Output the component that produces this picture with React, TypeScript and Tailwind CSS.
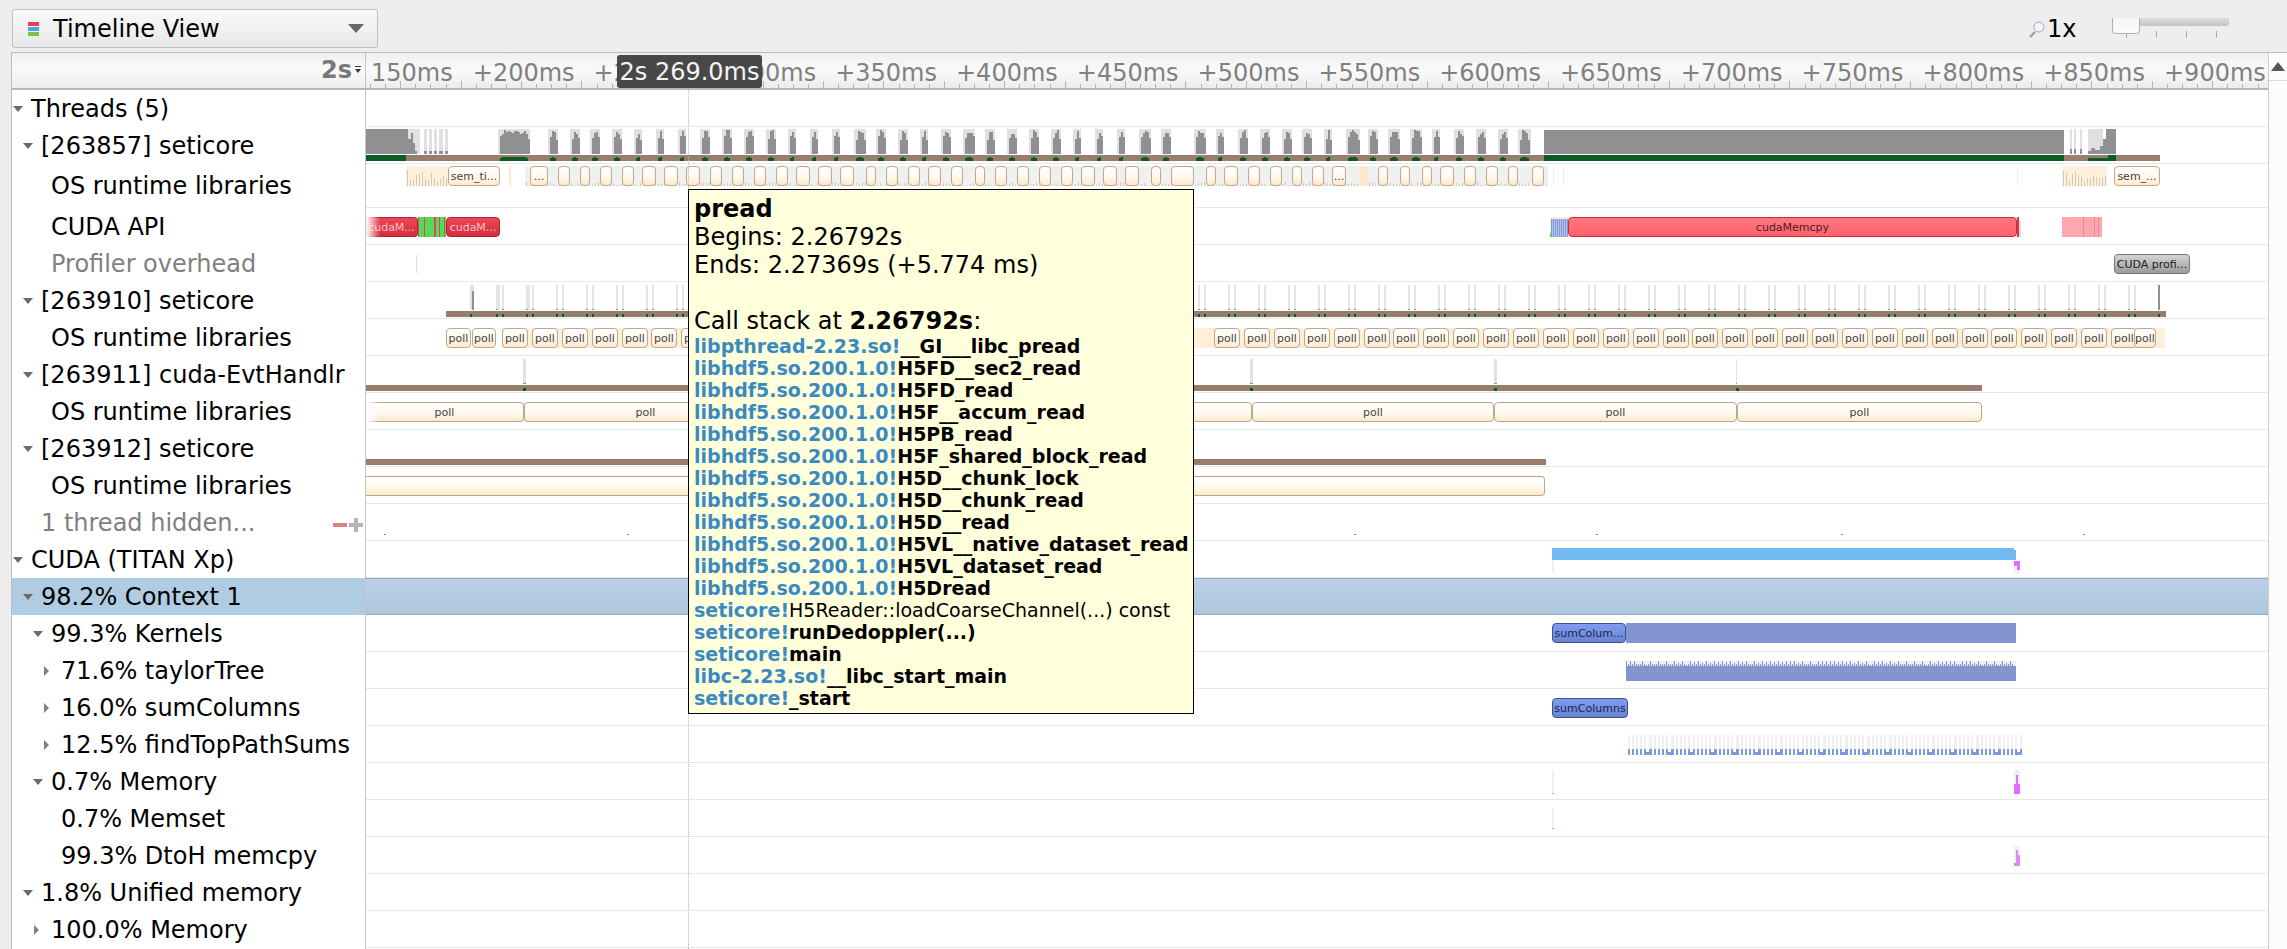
import type { ReactNode } from "react";

const rnd = (i: number) => (((Math.sin(i * 12.9898) * 43758.5453) % 1) + 1) % 1;
const range = (from: number, to: number, step: number) => {
  const out: number[] = [];
  for (let v = from; v < to; v += step) out.push(v);
  return out;
};

const GREY = "#909090";
const LIGHT = "#e0e0e0";
const BROWN = "#967d6e";
const GREEN = "#0c5a28";

// worker bursts of the main thread, in page pixels
const widths = [10, 10, 10, 10, 8, 8, 8, 12, 10, 10, 8, 10, 12];
const bursts: [number, number][] = [
  [498, 530],
  [548, 558],
  [570, 580],
  [590, 600],
  [612, 622],
  [634, 642],
  [656, 664],
  [678, 686],
  ...range(700, 1175, 21.95).map((x, i): [number, number] => [Math.round(x), Math.round(x) + widths[i % widths.length]]),
  [1194, 1206],
  [1216, 1224],
  [1238, 1248],
  [1260, 1270],
  [1282, 1292],
  [1302, 1312],
  [1324, 1332],
  [1346, 1360],
  [1368, 1378],
  [1388, 1400],
  [1410, 1422],
  [1432, 1440],
  [1454, 1464],
  [1476, 1486],
  [1498, 1508],
  [1518, 1531],
];

function Canvas({ h = 37, children }: { h?: number; children: ReactNode }) {
  return (
    <svg className="absolute left-0 top-0" width={1902} height={h} viewBox={`366 0 1902 ${h}`} shapeRendering="crispEdges">
      {children}
    </svg>
  );
}

const VARIANTS = {
  cream: "border-[#bda98a] bg-gradient-to-b from-[#ffffff] via-[#fff9f0] to-[#ffe9cc] text-[#444444]",
  red: "border-[#a82430] bg-gradient-to-b from-[#ee4656] to-[#d22c3e] text-[#ffc4c4]",
  bigRed: "border-[#c42c36] bg-gradient-to-b from-[#ff7680] to-[#ff626c] text-[#551a1e]",
  blue: "border-[#3f5288] bg-gradient-to-b from-[#7e9cf0] to-[#6a84d4] text-[#1c2650]",
  gray: "border-[#777777] bg-gradient-to-b from-[#d6d6d6] to-[#9a9a9a] text-[#222222]",
};

function Evt({ a, b, label, kind = "cream", top = 9, open }: { a: number; b: number; label?: string; kind?: keyof typeof VARIANTS; top?: number; open?: boolean }) {
  return (
    <div
      className={`absolute flex h-[20px] items-center justify-center overflow-hidden whitespace-nowrap border text-[11px] leading-none ${open ? "rounded-r-[4px] border-l-0" : "rounded-[4px]"} ${VARIANTS[kind]}`}
      style={{ left: a - 366, width: b - a, top }}
    >
      {label}
    </div>
  );
}

function ThreadOneChart() {
  return (
    <Canvas>
      <rect x={366} y={2} width={40} height={25} fill={GREY} />
      <rect x={406} y={2} width={14} height={25} fill={LIGHT} />
      <path d="M406 27V2h2v10h3v-6h2v10h2v8h2v3z" fill={GREY} />
      {[[424, 427], [429, 432], [434, 437], [439, 443], [445, 448]].map(([a, b]) => (
        <g key={a}>
          <rect x={a} y={2} width={b - a} height={25} fill={LIGHT} />
          <rect x={a} y={24} width={b - a} height={3} fill={GREY} />
        </g>
      ))}
      {bursts.map(([a, b], n) => (
        <g key={a}>
          <rect x={a} y={2} width={b - a} height={25} fill={LIGHT} />
          {range(a + 2, b - 1, 2).map((x, i, all) => {
            const edge = i === 0 || i === all.length - 1;
            const t = (edge ? 9 : 3) + rnd(n * 7 + i) * 4;
            return <rect key={x} x={x} y={Math.round(t)} width={2} height={27 - Math.round(t)} fill={GREY} />;
          })}
        </g>
      ))}
      <rect x={1544} y={3} width={520} height={24} fill={GREY} />
      {[[2070, 2072], [2074, 2076], [2080, 2082]].map(([a, b]) => (
        <g key={a}>
          <rect x={a} y={2} width={b - a} height={25} fill={LIGHT} />
          <rect x={a} y={22} width={b - a} height={5} fill={GREY} />
        </g>
      ))}
      <rect x={2088} y={2} width={15} height={25} fill={LIGHT} />
      <path d="M2088 27v-3h3v-3h4v2h5v-4h3v-7h3V2h10v25z" fill={GREY} />
      <rect x={366} y={28} width={1794} height={6} fill={BROWN} />
      <rect x={366} y={28} width={40} height={6} fill={GREEN} />
      {bursts.map(([a, b]) => (
        <g key={a}>
          <rect x={a + 2} y={31} width={b - a - 4} height={3} fill={GREEN} />
          <rect x={a + 4} y={30} width={Math.max(b - a - 8, 2)} height={1} fill={GREEN} />
        </g>
      ))}
      <rect x={1544} y={28} width={520} height={6} fill={GREEN} />
      <rect x={2088} y={31} width={20} height={3} fill={GREEN} />
      <rect x={2108} y={28} width={8} height={6} fill={GREEN} />
    </Canvas>
  );
}

function creamComb(a: number, b: number) {
  return range(a, b, 3).map((x, i) => {
    const top = Math.round(6 + rnd(i + a) * 12);
    return (
      <g key={x}>
        <rect x={x} y={2} width={3} height={20} fill="#fff0dc" />
        <rect x={x + 1} y={top} width={1} height={22 - top} fill="#d4c8b4" />
      </g>
    );
  });
}

function ThreadOneOs() {
  const boxes = bursts.slice(0, -1).map(([, end], i): [number, number] => [end, bursts[i + 1][0]]);
  return (
    <>
      <Canvas h={44}>
        <rect x={525} y={2} width={1023} height={20} fill="#f0f0f0" />
        {creamComb(406, 448)}
        <rect x={509} y={2} width={2} height={20} fill="#ffe9cc" />
        {range(526, 1548, 3).map((x, i) => {
          const top = Math.round(18 + rnd(i) * 3);
          return <rect key={x} x={x} y={top} width={1} height={22 - top} fill="#cfc8bc" />;
        })}
        <rect x={1360} y={2} width={8} height={20} fill="#ffe9cc" />
        <rect x={1553} y={2} width={1} height={20} fill="#eeeeee" />
        <rect x={1563} y={2} width={1} height={20} fill="#eeeeee" />
        <rect x={2017} y={2} width={1} height={20} fill="#eeeeee" />
        {creamComb(2062, 2106)}
      </Canvas>
      <Evt a={448} b={500} label="sem_ti..." top={2} />
      {boxes
        .filter(([a]) => a !== 1360)
        .map(([a, b]) => (
          <Evt key={a} a={a} b={b} top={2} label={a === 530 || a === 1332 ? "..." : undefined} />
        ))}
      <Evt a={1532} b={1544} top={2} />
      <Evt a={2114} b={2160} label="sem_..." top={2} />
    </>
  );
}

function CudaApi() {
  return (
    <>
      <Canvas>
        <rect x={418} y={9} width={28} height={20} fill="#58d858" />
        {[418, 424, 434, 439, 444].map((x) => (
          <rect key={x} x={x} y={9} width={x === 434 ? 2 : 1} height={20} fill="#d84c5c" />
        ))}
        <rect x={1550} y={9} width={18} height={20} fill="#f0f0f0" />
        {range(1551, 1568, 2).map((x) => (
          <rect key={x} x={x} y={11} width={1} height={18} fill="#7f98dc" />
        ))}
        <rect x={1552} y={11} width={15} height={18} fill="#8aa0dc" opacity={0.6} />
        <rect x={1550} y={25} width={2} height={4} fill="#58d858" />
        <rect x={2017} y={9} width={2} height={20} fill="#e8333f" />
        <rect x={2019} y={13} width={2} height={16} fill="#dddddd" />
        <rect x={2062} y={9} width={40} height={20} fill="#ffa6ae" />
        {[2083, 2094, 2098].map((x) => (
          <rect key={x} x={x} y={9} width={1} height={20} fill="#e88a92" />
        ))}
      </Canvas>
      <Evt a={366} b={418} label="cudaM..." kind="red" open />
      <div className="absolute left-0 top-[9px] h-[20px] w-[14px] bg-gradient-to-r from-[#ffffff] to-transparent" />
      <Evt a={446} b={500} label="cudaM..." kind="red" />
      <Evt a={1568} b={2017} label="cudaMemcpy" kind="bigRed" />
    </>
  );
}

function ProfilerTrack() {
  return (
    <>
      <Canvas>
        <rect x={416} y={10} width={1} height={18} fill="#dddddd" />
      </Canvas>
      <Evt a={2114} b={2190} label="CUDA profi..." kind="gray" />
    </>
  );
}

function ThreadTwoChart() {
  const starts = [...range(496, 690, 30), ...range(1198, 2130, 30)];
  return (
    <Canvas>
      <rect x={470} y={3} width={4} height={25} fill={LIGHT} />
      <rect x={472} y={9} width={2} height={19} fill={GREY} />
      {starts.map((x) => (
        <g key={x}>
          <rect x={x} y={3} width={x < 540 ? 4 : 2} height={25} fill="#e4e4e4" />
          <rect x={x + 6} y={3} width={2} height={25} fill="#e4e4e4" />
          <rect x={x} y={27} width={2} height={1} fill={GREY} />
          <rect x={x + 6} y={27} width={2} height={1} fill={GREY} />
        </g>
      ))}
      <rect x={2158} y={3} width={2} height={25} fill={GREY} />
      <rect x={446} y={29} width={1720} height={6} fill={BROWN} />
      {[470, ...starts, 2158].map((x) => (
        <g key={x}>
          <rect x={x} y={32} width={2} height={3} fill={GREEN} />
          <rect x={x + 6} y={32} width={x === 470 || x === 2158 ? 0 : 2} height={3} fill={GREEN} />
        </g>
      ))}
    </Canvas>
  );
}

function PollTrack() {
  const left = [446, 472, ...range(502, 690, 29.9)];
  const right = range(1214, 2130, 29.9);
  return (
    <>
      <Canvas>
        <rect x={502} y={9} width={1663} height={20} fill="#ffeed8" />
      </Canvas>
      {[...left, ...right].map((x) => (
        <Evt key={x} a={Math.round(x)} b={Math.round(x) + (x === 446 ? 25 : x === 472 ? 24 : 26)} label="poll" />
      ))}
      <Evt a={2134} b={2156} label="poll" />
    </>
  );
}

function ThinThread({ end, ticks = [] }: { end: number; ticks?: number[] }) {
  return (
    <Canvas>
      {ticks.map((x) => (
        <g key={x}>
          <rect x={x} y={3} width={x === 1736 ? 1 : 3} height={25} fill={LIGHT} />
          <rect x={x} y={27} width={x === 1736 ? 1 : 3} height={1} fill={GREY} />
        </g>
      ))}
      <rect x={366} y={29} width={end - 366} height={6} fill={BROWN} />
      {ticks.map((x) => (
        <rect key={x} x={x} y={32} width={3} height={3} fill={GREEN} />
      ))}
    </Canvas>
  );
}

function EvtHandlerOs() {
  return (
    <>
      <Evt a={366} b={524} label="poll" open />
      <div className="absolute left-0 top-[9px] h-[20px] w-[14px] bg-gradient-to-r from-[#ffffff] to-transparent" />
      <Evt a={524} b={767} label="poll" />
      <Evt a={1009} b={1252} label="poll" />
      <Evt a={1252} b={1494} label="poll" />
      <Evt a={1494} b={1737} label="poll" />
      <Evt a={1737} b={1982} label="poll" />
    </>
  );
}

function HiddenTicks() {
  return (
    <Canvas>
      {[384, 627, 1354, 1596, 1841, 2083].map((x) => (
        <rect key={x} x={x} y={30} width={2} height={1} fill="#888888" />
      ))}
    </Canvas>
  );
}

function GpuTrack() {
  return (
    <Canvas>
      <rect x={1552} y={7} width={462} height={12} fill="#72b9f2" />
      <rect x={2014} y={9} width={2} height={10} fill="#72b9f2" />
      <rect x={1552} y={20} width={2} height={12} fill="#f0f0f0" />
      <rect x={2014} y={20} width={6} height={12} fill="#f0f0f0" />
      <path d="M2014 20h6v9h-3v-4h-3z" fill="#e070fb" />
    </Canvas>
  );
}

function Stripes({ a, b, y, h }: { a: number; b: number; y: number; h: number }) {
  return (
    <>
      <rect x={a} y={y} width={b - a} height={h} fill="#8c96bc" />
      {range(a, b, 2).map((x) => (
        <rect key={x} x={x} y={y} width={1} height={h} fill="#7a94e4" />
      ))}
    </>
  );
}

function KernelsTrack() {
  return (
    <>
      <Canvas>
        <Stripes a={1626} b={2016} y={8} h={20} />
      </Canvas>
      <Evt a={1552} b={1626} label="sumColum..." kind="blue" top={8} />
    </>
  );
}

function TaylorTrack() {
  return (
    <Canvas>
      <rect x={1626} y={9} width={390} height={20} fill="#f0f0f0" />
      <Stripes a={1626} b={2016} y={14} h={15} />
      {range(1626, 2014, 2).map((x, i) => (
        <rect key={x} x={x} y={Math.round(9 + (i % 4 === 0 ? 0 : i % 4 === 2 ? rnd(i) * 4 : 3))} width={1} height={7} fill="#7a90d8" />
      ))}
    </Canvas>
  );
}

function FindTopTrack() {
  return (
    <Canvas>
      {range(1628, 2012, 21.8).map((p) => (
        <g key={p}>
          {[0, 4, 8, 12, 16, 21].map((dx) => (
            <g key={dx}>
              <rect x={Math.round(p + dx)} y={9} width={2} height={20} fill="#f0f0f0" />
              <rect x={Math.round(p + dx)} y={23} width={2} height={6} fill="#7f98e0" />
            </g>
          ))}
          <rect x={Math.round(p + 16)} y={26} width={7} height={3} fill="#7f98e0" />
        </g>
      ))}
    </Canvas>
  );
}

function MemoryTrack() {
  return (
    <Canvas>
      <rect x={1552} y={7} width={2} height={24} fill="#f0f0f0" />
      <rect x={1552} y={30} width={2} height={1} fill="#50d8e8" />
      <rect x={2014} y={7} width={6} height={24} fill="#f0f0f0" />
      <path d="M2014 31V21h2V12h2v9h2v10z" fill="#e070fb" />
    </Canvas>
  );
}

function MemsetTrack() {
  return (
    <Canvas>
      <rect x={1552} y={9} width={2} height={20} fill="#f0f0f0" />
      <rect x={1552} y={28} width={2} height={1} fill="#50d8e8" />
    </Canvas>
  );
}

function DtohTrack() {
  return (
    <Canvas>
      <rect x={2014} y={9} width={6} height={20} fill="#f0f0f0" />
      <path d="M2014 29v-3h2V13h2v5h2v11z" fill="#dd88ee" />
    </Canvas>
  );
}

const INDENT = ["pl-px", "pl-[11px]", "pl-[21px]", "pl-[31px]"];

type RowDef = { label: string; level: number; arrow?: "down" | "right"; dim?: boolean; tall?: boolean; selected?: boolean; extra?: ReactNode; track?: ReactNode };

const rows: RowDef[] = [
  { label: "Threads (5)", level: 0, arrow: "down" },
  { label: "[263857] seticore", level: 1, arrow: "down", track: <ThreadOneChart /> },
  { label: "OS runtime libraries", level: 2, tall: true, track: <ThreadOneOs /> },
  { label: "CUDA API", level: 2, track: <CudaApi /> },
  { label: "Profiler overhead", level: 2, dim: true, track: <ProfilerTrack /> },
  { label: "[263910] seticore", level: 1, arrow: "down", track: <ThreadTwoChart /> },
  { label: "OS runtime libraries", level: 2, track: <PollTrack /> },
  { label: "[263911] cuda-EvtHandlr", level: 1, arrow: "down", track: <ThinThread end={1982} ticks={[523, 1250, 1494, 1736]} /> },
  { label: "OS runtime libraries", level: 2, track: <EvtHandlerOs /> },
  { label: "[263912] seticore", level: 1, arrow: "down", track: <ThinThread end={1546} /> },
  { label: "OS runtime libraries", level: 2, track: <Evt a={366} b={1545} open /> },
  { label: "1 thread hidden...", level: 1, dim: true, extra: <HiddenControls />, track: <HiddenTicks /> },
  { label: "CUDA (TITAN Xp)", level: 0, arrow: "down", track: <GpuTrack /> },
  { label: "98.2% Context 1", level: 1, arrow: "down", selected: true },
  { label: "99.3% Kernels", level: 2, arrow: "down", track: <KernelsTrack /> },
  { label: "71.6% taylorTree", level: 3, arrow: "right", track: <TaylorTrack /> },
  { label: "16.0% sumColumns", level: 3, arrow: "right", track: <Evt a={1552} b={1628} label="sumColumns" kind="blue" /> },
  { label: "12.5% findTopPathSums", level: 3, arrow: "right", track: <FindTopTrack /> },
  { label: "0.7% Memory", level: 2, arrow: "down", track: <MemoryTrack /> },
  { label: "0.7% Memset", level: 3, track: <MemsetTrack /> },
  { label: "99.3% DtoH memcpy", level: 3, track: <DtohTrack /> },
  { label: "1.8% Unified memory", level: 1, arrow: "down" },
  { label: "100.0% Memory", level: 2, arrow: "right" },
];

function HiddenControls() {
  return (
    <div className="absolute left-[321px] top-[14px] flex items-center gap-[2px]">
      <div className="h-[4px] w-[14px] bg-[#d88282]" />
      <svg width="14" height="14" viewBox="0 0 14 14">
        <path d="M5 0h4v5h5v4H9v5H5V9H0V5h5z" fill="#b4b4b4" />
      </svg>
    </div>
  );
}

function Row({ row }: { row: RowDef }) {
  return (
    <div className={`flex shrink-0 ${row.tall ? "h-[44px]" : "h-[37px]"}`}>
      <div
        className={`relative flex w-[354px] shrink-0 items-center border-r border-[#c4c4c4] text-[24px] ${INDENT[row.level]} ${row.selected ? "bg-[#b0cce2]" : "bg-white"} ${row.dim ? "text-[#808080]" : "text-black"}`}
      >
        <span className="flex h-full w-[18px] shrink-0 items-center">
          {row.arrow === "down" && (
            <svg width="10" height="6" viewBox="0 0 10 6">
              <path d="M0 0h10L5 6z" fill="#6a6a6a" />
            </svg>
          )}
          {row.arrow === "right" && (
            <svg width="14" height="10" viewBox="0 0 14 10">
              <path d="M1 0l5 5-5 5z" fill="#808080" />
            </svg>
          )}
        </span>
        <span className="whitespace-nowrap leading-none">{row.label}</span>
        {row.extra}
      </div>
      <div
        className={`relative flex-1 overflow-hidden border-b ${row.selected ? "border-y border-[#94abbd] bg-gradient-to-b from-[#bbd0e6] to-[#adc8dc]" : "border-[#e8e8e8] bg-white"}`}
      >
        {row.track}
      </div>
    </div>
  );
}

function Ruler() {
  const labels = range(200, 901, 50);
  return (
    <div className="flex h-[37px] shrink-0 border-b-2 border-[#b8b8b8] bg-gradient-to-b from-[#efefef] via-[#fafafa] to-[#ececec]">
      <div className="flex w-[354px] shrink-0 items-center justify-end border-r border-[#c4c4c4] pb-[2px] pr-[3px]">
        <span className="text-[24px] font-bold leading-none text-[#777777]">2s</span>
        <svg className="ml-[2px]" width="8" height="10" viewBox="0 0 8 10">
          <path d="M1 1h6v1H1zM1 4h6L4 8z" fill="#333333" />
        </svg>
      </div>
      <div className="relative flex-1 overflow-hidden">
        <span className="absolute left-[5px] top-[8px] whitespace-nowrap text-[24px] leading-none text-[#808080]">150ms</span>
        {labels.map((ms, i) => (
          <span key={ms} className="absolute top-[8px] whitespace-nowrap text-[24px] leading-none text-[#808080]" style={{ left: 472.8 - 366 + i * 120.8 }}>
            +{ms}ms
          </span>
        ))}
        <svg className="absolute bottom-0 left-0" width={1902} height={7} viewBox="366 0 1902 7" shapeRendering="crispEdges">
          {range(0, 128, 1).map((i) => (
            <rect key={i} x={Math.round(370 + i * 15.1)} y={i % 4 === 2 ? 0 : 3} width={1} height={i % 4 === 2 ? 7 : 4} fill="#b4b4b4" />
          ))}
        </svg>
      </div>
    </div>
  );
}

const stack: [string, string, boolean?][] = [
  ["libpthread-2.23.so", "__GI___libc_pread"],
  ["libhdf5.so.200.1.0", "H5FD__sec2_read"],
  ["libhdf5.so.200.1.0", "H5FD_read"],
  ["libhdf5.so.200.1.0", "H5F__accum_read"],
  ["libhdf5.so.200.1.0", "H5PB_read"],
  ["libhdf5.so.200.1.0", "H5F_shared_block_read"],
  ["libhdf5.so.200.1.0", "H5D__chunk_lock"],
  ["libhdf5.so.200.1.0", "H5D__chunk_read"],
  ["libhdf5.so.200.1.0", "H5D__read"],
  ["libhdf5.so.200.1.0", "H5VL__native_dataset_read"],
  ["libhdf5.so.200.1.0", "H5VL_dataset_read"],
  ["libhdf5.so.200.1.0", "H5Dread"],
  ["seticore", "H5Reader::loadCoarseChannel(...) const", true],
  ["seticore", "runDedoppler(...)"],
  ["seticore", "main"],
  ["libc-2.23.so", "__libc_start_main"],
  ["seticore", "_start"],
];

function Tooltip() {
  return (
    <div className="absolute left-[688px] top-[189px] h-[525px] w-[506px] border border-black bg-[#ffffdc] pl-[5px] pt-[5px] text-[24px] leading-[28px] text-black">
      <div className="font-bold">pread</div>
      <div>Begins: 2.26792s</div>
      <div>Ends: 2.27369s (+5.774 ms)</div>
      <div className="h-[28px]" />
      <div>
        Call stack at <b>2.26792s</b>:
      </div>
      <div className="text-[19px] leading-[22px]">
        {stack.map(([mod, fn, plain], i) => (
          <div key={i} className="whitespace-nowrap">
            <span className="font-bold text-[#3a8ac0]">{mod}!</span>
            <span className={plain ? "font-normal" : "font-bold"}>{fn}</span>
          </div>
        ))}
      </div>
    </div>
  );
}

export default function App() {
  return (
    <div className="relative h-[949px] w-[2287px] overflow-hidden bg-[#eeeeee] font-['DejaVu_Sans',sans-serif]">
      <div className="relative flex h-[52px] items-start pl-[12px] pt-[9px]">
        <div className="flex h-[39px] w-[366px] items-center rounded-[3px] border border-[#c0c0c0] bg-gradient-to-b from-[#fafafa] to-[#e8e8e8] pl-[15px] pr-[13px]">
          <div className="flex w-[11px] flex-col gap-[1px]">
            <div className="h-[4px] bg-[#e8404c]" />
            <div className="h-[4px] bg-[#48a8e0]" />
            <div className="h-[4px] bg-[#80c040]" />
          </div>
          <span className="ml-[14px] flex-1 text-[24px] leading-none text-black">Timeline View</span>
          <div className="h-0 w-0 border-x-[8px] border-t-[9px] border-x-transparent border-t-[#666666]" />
        </div>
        <div className="absolute left-[2029px] top-[17px] flex items-center">
          <svg width="16" height="17" viewBox="0 0 16 17">
            <path d="M1 16l5-5" stroke="#a8a8a8" strokeWidth="2.5" fill="none" />
            <circle cx="10" cy="6" r="5" fill="#f4f8fc" stroke="#a0a8b0" />
          </svg>
          <span className="ml-[2px] text-[24px] leading-none text-black">1x</span>
        </div>
        <div className="absolute left-[2112px] top-[18px] h-[20px] w-[117px]">
          <div className="absolute left-[26px] right-0 top-0 h-[8px] rounded-br-[2px] bg-gradient-to-b from-[#dcdcdc] to-[#c4c4c4]" />
          <div className="absolute left-0 top-0 h-[16px] w-[28px] rounded-b-[4px] border border-t-0 border-[#b0b0b0] bg-gradient-to-b from-[#f4f4f4] to-[#fcfcfc]" />
          <div className="absolute left-[14px] top-[16px] h-[4px] w-px bg-[#aaaaaa]" />
          <div className="absolute left-[44px] top-[13px] h-[7px] w-px bg-[#aaaaaa]" />
          <div className="absolute left-[74px] top-[13px] h-[7px] w-px bg-[#aaaaaa]" />
          <div className="absolute left-[104px] top-[13px] h-[7px] w-px bg-[#aaaaaa]" />
        </div>
      </div>
      <div className="ml-[11px] flex h-[897px] border-l border-t border-[#bcbcbc]">
        <div className="flex w-[2256px] shrink-0 flex-col overflow-hidden">
          <Ruler />
          {rows.map((row, i) => (
            <Row key={i} row={row} />
          ))}
          <div className="flex flex-1">
            <div className="w-[354px] shrink-0 border-r border-[#c4c4c4] bg-white" />
            <div className="flex-1 bg-white" />
          </div>
        </div>
        <div className="flex-1 border-l border-[#cccccc] bg-[#fcfcfc]">
          <div className="flex h-[28px] items-center justify-center border-b border-[#dddddd]">
            <div className="h-0 w-0 border-x-[7px] border-b-[9px] border-x-transparent border-b-[#555555]" />
          </div>
        </div>
      </div>
      <div className="absolute bottom-0 left-[688px] top-[89px] border-l border-dotted border-[#b8b8b8]" />
      <div className="absolute left-[617px] top-[55px] flex h-[33px] w-[145px] items-center justify-center rounded-[3px] bg-[#484848] text-[24px] leading-none text-[#f4f4f4]">
        2s 269.0ms
      </div>
      <Tooltip />
    </div>
  );
}
